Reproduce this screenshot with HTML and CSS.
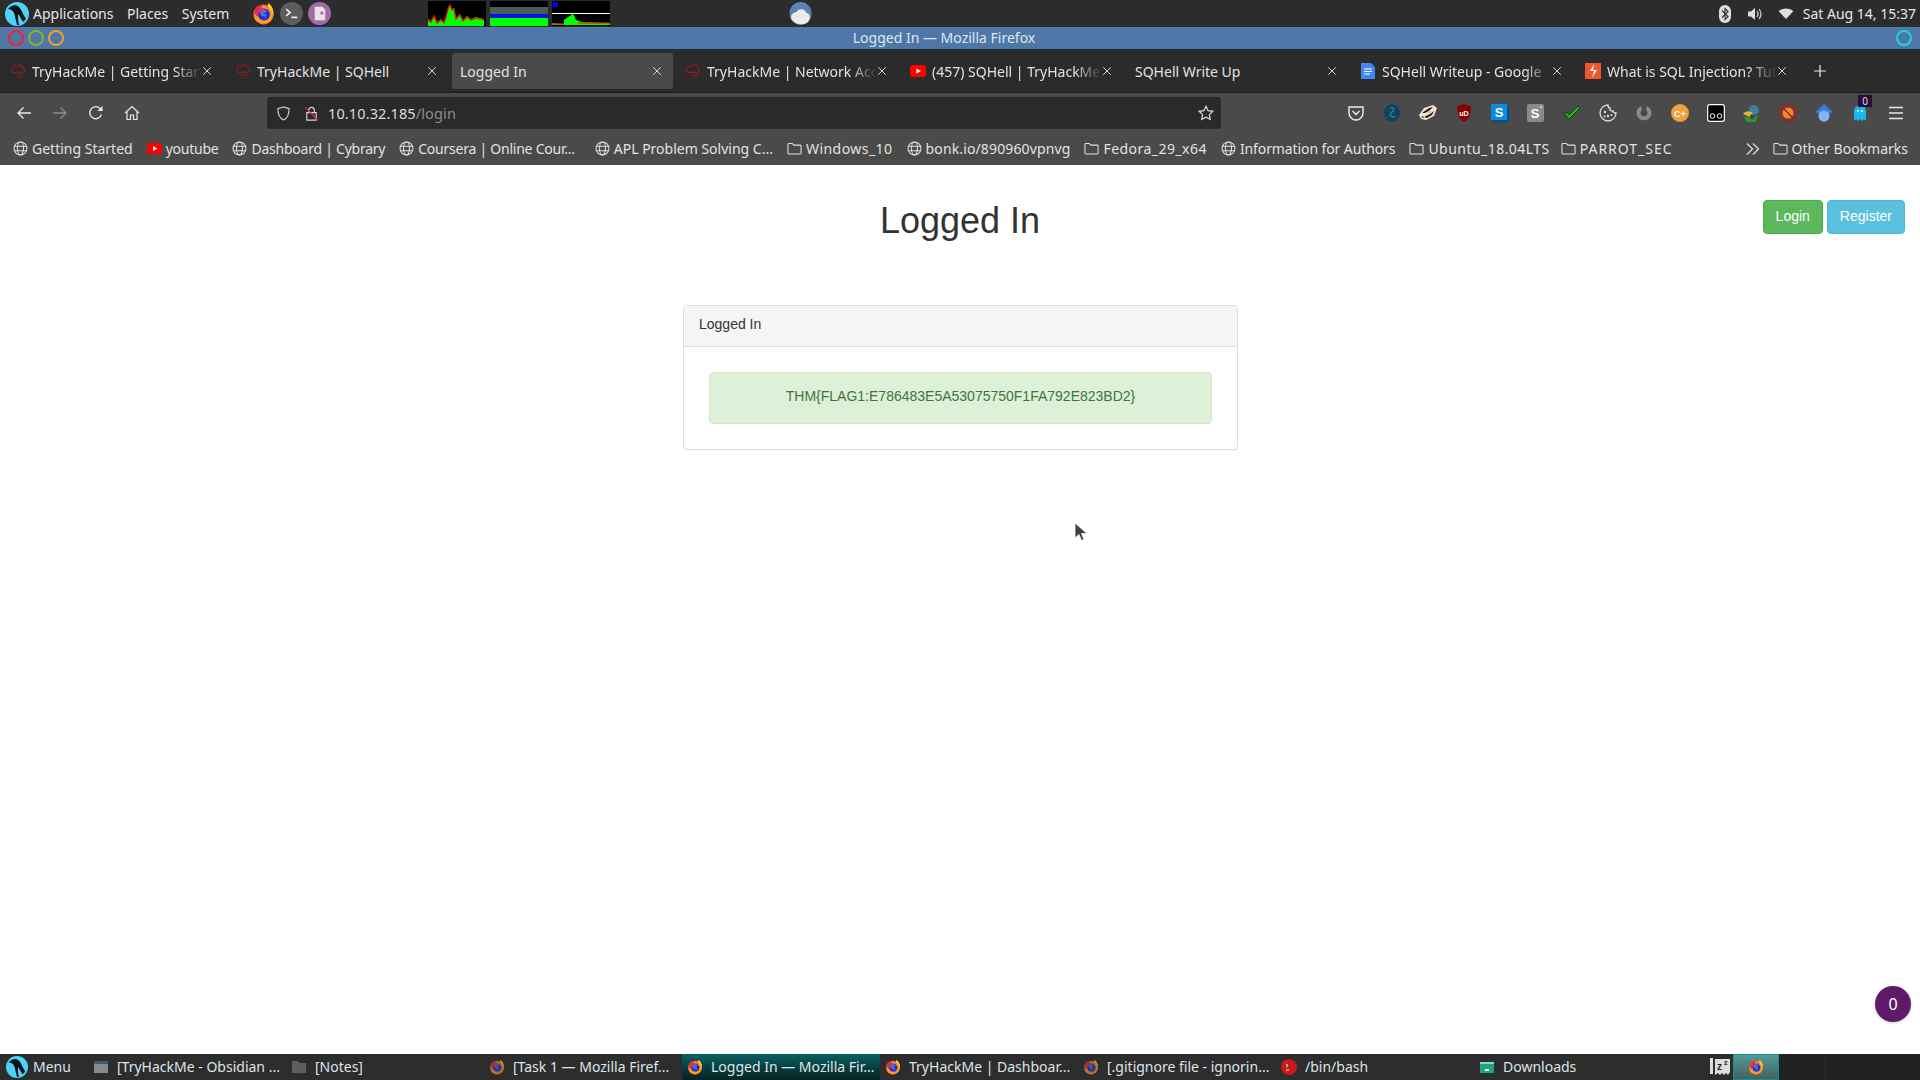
FILE: index.html
```html
<!DOCTYPE html>
<html lang="en">
<head>
<meta charset="utf-8">
<title>Logged In</title>
<link rel="stylesheet" href="styles.css">
</head>
<body>
<svg class="defs" width="0" height="0" aria-hidden="true">
  <defs>
    <symbol id="fx" viewBox="0 0 24 24">
      <circle cx="12" cy="13" r="10.5" fill="#f3702a"/>
      <path d="M4 19C9 24 19 24 22 15c1-4 0-9-4-13 1 3 0 5-1 6-2-3-5-4-7-4 2 2 2 3 2 4-3-1-7 1-9 5 0 3 0 5 1 6z" fill="#ff9d1f"/>
      <path d="M17 1c3 2 6 7 5 12-1-4-3-7-6-8 1-1 1-3 1-4z" fill="#ffd322"/>
      <circle cx="12.5" cy="13" r="6.2" fill="#1a2fd0"/>
      <path d="M8 9c3-2 7-1 8 1-2 1-3 2-6 1l5 2c1 3-2 6-6 5 3 0 5-1 5-3-3 1-6-2-6-6z" fill="#fff" opacity=".3"/>
      <path d="M3 12C2 5 8 2 11 4l-2 2 4 2-3 1c-2 0-4 2-3 5l-2 1z" fill="#e62b4f"/>
    </symbol>
    <symbol id="globe" viewBox="0 0 16 16">
      <g fill="none" stroke="#e2e2e2" stroke-width="1.1">
        <circle cx="8" cy="8" r="6.9"/>
        <ellipse cx="8" cy="8" rx="3.2" ry="6.9"/>
        <path d="M1.5 5.6h13M1.5 10.4h13"/>
      </g>
    </symbol>
    <symbol id="folder" viewBox="0 0 16 16">
      <path d="M1 3.6c0-.6.4-1 1-1h3.6l1.6 1.8H14c.6 0 1 .4 1 1v7.4c0 .6-.4 1-1 1H2c-.6 0-1-.4-1-1z" fill="none" stroke="#e2e2e2" stroke-width="1.1"/>
    </symbol>
    <symbol id="thm" viewBox="0 0 18 18">
      <g fill="none" stroke="#8a1d1d" stroke-width="1.4">
        <path d="M4 10.6C1 10.6.6 7.2 3 6.600c0-3 2.800-4.600 5.200-3.200C9.800 1 13.600 1.800 13.800 5c3-.2 3.600 5.600.2 5.600z"/>
        <path d="M6 13.200h9M9 15.800h5" stroke-width="1"/>
      </g>
    </symbol>
    <symbol id="yt" viewBox="0 0 16 16">
      <rect x="0" y="2" width="16" height="12" rx="3" fill="#f00"/>
      <path d="M6.4 5.4 11 8l-4.6 2.6z" fill="#fff"/>
    </symbol>
    <symbol id="parrot" viewBox="0 0 24 24">
      <circle cx="12" cy="12" r="12" fill="#4fd2f7"/>
      <path d="M3 7c3-4 8-5 11-2 3 3 4 8 7 12-1 1-2 2-3 3-2-3-3-6-5-8 0 3 0 7 1 11h-2c-1-4-2-9-3-12C8 8 5 7 3 7z" fill="#06121c"/>
    </symbol>
    <symbol id="close" viewBox="0 0 12 12">
      <path d="M1.500 1.500l9 9M10.500 1.500l-9 9" stroke="#e6e6e6" stroke-width="1.100" fill="none"/>
    </symbol>
  </defs>
</svg>

<div class="desktop">
  <header class="panel">
    <div class="panel-left">
      <svg class="logo"><use href="#parrot"/></svg>
      <nav class="panel-menu"><span>Applications</span><span>Places</span><span>System</span></nav>
      <div class="launchers">
        <svg class="launch"><use href="#fx"/></svg>
        <svg class="launch" viewBox="0 0 24 24"><circle cx="12" cy="12" r="12" fill="#5c5c5c"/><path d="M6.500 7.500l4 3.500-4 3.500M12 16h6" fill="none" stroke="#eee" stroke-width="1.700"/></svg>
        <svg class="launch" viewBox="0 0 24 24"><circle cx="12" cy="12" r="12" fill="#a36aa6"/><path d="M7 5h8l3 3v11H7z" fill="#e9e3e3"/><path d="M13 10h3v3h-3z" fill="#a36aa6"/></svg>
      </div>
      <div class="monitors">
        <svg class="monitor" viewBox="0 0 58 25" preserveAspectRatio="none"><rect width="58" height="25" fill="#000"/><path d="M0 25V18l3 2 3-6 3 7 4-3 3 3 2-6 2-8 2-4 2 5 2-1 2 10 4-4 3 6 4-4 4 3 5-2 8 2v7z" fill="#0f0"/><path d="M0 19l3 2 3-6 3 7 4-3 3 3 2-6 2-8 2-4 2 5 2-1 2 10 4-4 3 6 4-4 4 3 5-2 8 2" fill="none" stroke="#f00" stroke-width="1.200"/></svg>
        <svg class="monitor" viewBox="0 0 58 25" preserveAspectRatio="none"><rect width="58" height="25" fill="#000"/><rect y="6" width="58" height="9" fill="#4b5c55"/><rect y="13" width="58" height="4" fill="#0018e0"/><rect y="17" width="58" height="8" fill="#0f0"/></svg>
        <svg class="monitor" viewBox="0 0 58 25" preserveAspectRatio="none"><rect width="58" height="25" fill="#000"/><rect x="1" y="1" width="5" height="5" fill="#00f"/><rect y="12" width="58" height="1" fill="#fff"/><path d="M12 23V19l4-3 2-1 2-2 2 1 2 5 6 2 28 1v2H0v-2z" fill="#0f0"/><path d="M0 23h12M26 22h32" stroke="#f00"/></svg>
      </div>
      <svg class="weather" viewBox="0 0 24 24"><ellipse cx="12" cy="12.500" rx="11.500" ry="12" fill="#5a82b4"/><path d="M3 19c-3-5 3-8 5-8 1-4 9-4 10 1 4 0 5 6 2 9-4 4-13 4-17-2z" fill="#ececec"/></svg>
    </div>
    <div class="tray">
      <svg class="tray-bt" viewBox="0 0 12 18"><rect width="12" height="18" rx="6" fill="#ddd"/><path d="M3 5.500l6 6-3 3V3.500l3 3-6 6" fill="none" stroke="#2c2c2c" stroke-width="1.100"/></svg>
      <svg class="tray-vol" viewBox="0 0 16 16"><path d="M1 5.500h3L8 2v12l-4-3.500H1z" fill="#ddd"/><path d="M10 5c1.300 1.800 1.300 4.200 0 6M12 3c2.400 3 2.400 7 0 10" fill="none" stroke="#ddd" stroke-width="1.200"/></svg>
      <svg class="tray-wifi" viewBox="0 0 16 12"><path d="M0 3.500C4-.5 12-.5 16 3.500L8 12z" fill="#ddd"/></svg>
      <span class="clock">Sat Aug 14, 15:37</span>
    </div>
  </header>

  <div class="titlebar">
    <div class="win-btns"><i class="ring ring-red"></i><i class="ring ring-green"></i><i class="ring ring-orange"></i></div>
    <span class="win-title">Logged In — Mozilla Firefox</span>
    <i class="ring ring-cyan"></i>
  </div>

  <div class="tabbar">
    <div class="tab"><svg class="tab-ico"><use href="#thm"/></svg><span class="tab-title fade">TryHackMe | Getting Start</span><svg class="tab-x"><use href="#close"/></svg></div>
    <div class="tab"><svg class="tab-ico"><use href="#thm"/></svg><span class="tab-title">TryHackMe | SQHell</span><svg class="tab-x"><use href="#close"/></svg></div>
    <div class="tab tab-active"><span class="tab-title">Logged In</span><svg class="tab-x"><use href="#close"/></svg></div>
    <div class="tab"><svg class="tab-ico"><use href="#thm"/></svg><span class="tab-title fade">TryHackMe | Network Acc</span><svg class="tab-x"><use href="#close"/></svg></div>
    <div class="tab"><svg class="tab-ico"><use href="#yt"/></svg><span class="tab-title fade">(457) SQHell | TryHackMe</span><svg class="tab-x"><use href="#close"/></svg></div>
    <div class="tab"><span class="tab-title">SQHell Write Up</span><svg class="tab-x"><use href="#close"/></svg></div>
    <div class="tab"><svg class="tab-ico" viewBox="0 0 16 16"><path d="M1 0h10l4 4v12H1z" fill="#4285f4"/><path d="M4 6h8M4 8.500h8M4 11h6" stroke="#fff" stroke-width="1.200"/></svg><span class="tab-title fade">SQHell Writeup - Google</span><svg class="tab-x"><use href="#close"/></svg></div>
    <div class="tab"><svg class="tab-ico" viewBox="0 0 16 16"><rect width="16" height="16" fill="#f0562a"/><path d="M9 1 5 8h4l-2 7 5-8H8z" fill="#fff"/></svg><span class="tab-title fade">What is SQL Injection? Tut</span><svg class="tab-x"><use href="#close"/></svg></div>
    <svg class="tab-plus" viewBox="0 0 12 12"><path d="M6 0v12M0 6h12" stroke="#eee" stroke-width="1.200"/></svg>
  </div>

  <div class="navbar">
    <div class="nav-btns">
      <svg class="nav-ico" viewBox="0 0 16 16"><path d="M15 8H2M7.500 2.500 2 8l5.500 5.500" fill="none" stroke="#e8e8e8" stroke-width="1.300"/></svg>
      <svg class="nav-ico" viewBox="0 0 16 16"><path d="M1 8h13M8.500 2.500 14 8l-5.500 5.500" fill="none" stroke="#8a8a8a" stroke-width="1.300"/></svg>
      <svg class="nav-ico" viewBox="0 0 16 16"><path d="M13.500 9.500A6 6 0 1 1 11.500 3L14 5" fill="none" stroke="#e8e8e8" stroke-width="1.300"/><path d="M14.500 1v5h-5z" fill="#e8e8e8"/></svg>
      <svg class="nav-ico" viewBox="0 0 16 16"><path d="M1 8 8 1.500 15 8M3 7v7.500h3.500V10h3v4.500H13V7" fill="none" stroke="#e8e8e8" stroke-width="1.200"/></svg>
    </div>
    <div class="urlbar">
      <svg class="url-shield" viewBox="0 0 16 16"><path d="M8 1 2 2.800c0 5 1 9.500 6 12.200 5-2.700 6-7.200 6-12.200z" fill="none" stroke="#cfcfcf" stroke-width="1.200"/></svg>
      <svg class="url-lock" viewBox="0 0 16 16"><path d="M5 7V4.500a3 3 0 0 1 6 0V7M3 7h10v8H3z" fill="none" stroke="#d8d8d8" stroke-width="1.200"/><path d="M1.500 1.500 14.500 15" stroke="#e22850" stroke-width="1.400"/></svg>
      <span class="url-text">10.10.32.185<span class="url-dim">/login</span></span>
      <svg class="url-star" viewBox="0 0 16 16"><path d="M8 1.300l2.100 4.400 4.800.6-3.500 3.300.9 4.800L8 12.100l-4.300 2.300.9-4.800L1.100 6.300l4.800-.6z" fill="none" stroke="#dcdcdc" stroke-width="1.200"/></svg>
    </div>
    <div class="ext-row">
      <svg class="ext" viewBox="0 0 18 18"><path d="M2 3h14v6a7 7 0 0 1-14 0z" fill="none" stroke="#eee" stroke-width="1.400"/><path d="M5.500 7 9 10.500 12.500 7" fill="none" stroke="#eee" stroke-width="1.400"/></svg>
      <svg class="ext" viewBox="0 0 18 18"><ellipse cx="9" cy="9" rx="8" ry="9" fill="#12435c"/><path d="M7 4c3-1 5 1 3 3s-4 3-2 5 3 0 4 1" fill="none" stroke="#2c86a8" stroke-width="1.300"/></svg>
      <svg class="ext" viewBox="0 0 18 18"><path d="M0 11 5 4l9-3 4 3-3 8-8 4-5-1z" fill="#efe3d2"/><path d="M3 9l7-5 4-1-3 3-5 3zM5 13l6-3 4-3-2 4-5 3zM2 13l2-1 1 2z" fill="#2a2018"/><path d="M9 8l3-1-2 2z" fill="#c47a3c"/></svg>
      <svg class="ext" viewBox="0 0 18 18"><path d="M9 0 16 2.500c0 7-1 12-7 15.500C3 14.500 2 9.500 2 2.500z" fill="#800"/><text x="9" y="11.500" class="ext-letter" text-anchor="middle">uD</text></svg>
      <svg class="ext" viewBox="0 0 18 18"><path d="M0 0h16v16H0z" fill="#0a8de0"/><path d="M16 2l2 2v14H3l-3-2h16z" fill="#05528a"/><text x="8" y="13" class="ext-s" text-anchor="middle">S</text></svg>
      <svg class="ext" viewBox="0 0 18 18"><rect width="17" height="18" rx="2" fill="#8b8b8b"/><text x="8" y="14" class="ext-s" text-anchor="middle">S</text><circle cx="14" cy="3" r="1" fill="#eee"/></svg>
      <svg class="ext" viewBox="0 0 18 18"><path d="M1 9l5 6L17 4l-2-2-9 9-3-3z" fill="#1db81d" stroke="#0d3a0d" stroke-width="1"/></svg>
      <svg class="ext" viewBox="0 0 18 18"><path d="M9 1a8 8 0 1 0 8 8c-2 0-3-1-3-2-2 0-4-1-3-3-1 0-2-1-2-3z" fill="none" stroke="#ddd" stroke-width="1.300"/><circle cx="6" cy="8" r="1.200" fill="#ddd"/><circle cx="9" cy="12" r="1.200" fill="#ddd"/><circle cx="5.500" cy="12.500" r="1" fill="#ddd"/><circle cx="12.500" cy="11" r="1" fill="#ddd"/></svg>
      <svg class="ext" viewBox="0 0 18 18"><path d="M6 2a7.500 7.500 0 1 0 6 0l-1 4a3.500 3.500 0 1 1-4 0z" fill="#8a8a8a"/></svg>
      <svg class="ext" viewBox="0 0 18 18"><circle cx="9" cy="9" r="9" fill="#f0a03c"/><text x="9" y="13" class="ext-c" text-anchor="middle">C+</text></svg>
      <svg class="ext" viewBox="0 0 18 18"><rect x=".7" y=".7" width="16.600" height="16.600" rx="2" fill="#000" stroke="#fff" stroke-width="1.200"/><circle cx="5.500" cy="12" r="2.300" fill="none" stroke="#fff"/><circle cx="12.500" cy="12" r="2.300" fill="none" stroke="#fff"/></svg>
      <svg class="ext" viewBox="0 0 18 18"><circle cx="11" cy="6" r="5" fill="#3f7ea8"/><path d="M0 10c3-4 7-3 10-1-2 1-3 3-4 4-2-2-4-2-6-3z" fill="#e8b82c"/><path d="M1 13c3-1 6 0 8 3l6-6-2 8H4z" fill="#2a9c2a"/></svg>
      <svg class="ext" viewBox="0 0 18 18"><circle cx="9" cy="9" r="5.500" fill="#e98a2c"/><circle cx="9" cy="9" r="8" fill="none" stroke="#c41212" stroke-width="1.500"/><path d="M3 3l12 12" stroke="#c41212" stroke-width="1.500"/></svg>
      <svg class="ext" viewBox="0 0 18 18"><path d="M9 0 18 8 14 10H4L0 8z" fill="#3b7de0"/><circle cx="9" cy="12" r="5.500" fill="#8ab4f8"/></svg>
      <span class="ext-ghost">
        <svg class="ext" viewBox="0 0 18 18"><path d="M3 17V7a6 6 0 0 1 12 0v10l-2-2-2 2-2-2-2 2-2-2z" fill="#1cb5ec"/><circle cx="7" cy="7" r="1" fill="#fff"/><circle cx="11" cy="7" r="1" fill="#fff"/></svg>
        <span class="ghost-badge">0</span>
      </span>
      <svg class="ext" viewBox="0 0 18 18"><path d="M2 3.500h14M2 9h14M2 14.500h14" stroke="#e8e8e8" stroke-width="1.500"/></svg>
    </div>
  </div>

  <div class="bookmarks">
    <div class="bm"><svg class="bm-ico"><use href="#globe"/></svg>Getting Started</div>
    <div class="bm bm-tight"><svg class="bm-ico"><use href="#yt"/></svg>youtube</div>
    <div class="bm bm-tight"><svg class="bm-ico"><use href="#globe"/></svg>Dashboard | Cybrary</div>
    <div class="bm bm-tight"><svg class="bm-ico"><use href="#globe"/></svg>Coursera | Online Cour...</div>
    <div class="bm bm-shift"><svg class="bm-ico"><use href="#globe"/></svg>APL Problem Solving C...</div>
    <div class="bm bm-wide"><svg class="bm-ico"><use href="#folder"/></svg>Windows_10</div>
    <div class="bm bm-loose"><svg class="bm-ico"><use href="#globe"/></svg>bonk.io/890960vpnvg</div>
    <div class="bm bm-wide"><svg class="bm-ico"><use href="#folder"/></svg>Fedora_29_x64</div>
    <div class="bm bm-snug"><svg class="bm-ico"><use href="#globe"/></svg>Information for Authors</div>
    <div class="bm bm-wide"><svg class="bm-ico"><use href="#folder"/></svg>Ubuntu_18.04LTS</div>
    <div class="bm bm-widest"><svg class="bm-ico"><use href="#folder"/></svg>PARROT_SEC</div>
    <div class="bm-right">
      <svg class="bm-more" viewBox="0 0 14 14"><path d="M1 1.500 6.500 7 1 12.500M7 1.500 12.500 7 7 12.500" fill="none" stroke="#e2e2e2" stroke-width="1.200"/></svg>
      <div class="bm"><svg class="bm-ico"><use href="#folder"/></svg>Other Bookmarks</div>
    </div>
  </div>

  <main class="page">
    <div class="auth-btns">
      <a class="btn btn-login">Login</a>
      <a class="btn btn-register">Register</a>
    </div>
    <h1 class="page-title">Logged In</h1>
    <section class="card">
      <div class="card-head">Logged In</div>
      <div class="card-body">
        <div class="alert">THM{FLAG1:E786483E5A53075750F1FA792E823BD2}</div>
      </div>
    </section>
    <div class="float-badge">0</div>
    <svg class="cursor" viewBox="0 0 14 20"><path d="M1 1v15l4-3.500 2.500 6 2.500-1-2.500-6h5.500z" fill="#404040" stroke="#fff" stroke-width=".8"/></svg>
  </main>

  <footer class="taskbar">
    <div class="menu-btn"><svg class="menu-logo"><use href="#parrot"/></svg>Menu</div>
    <div class="tasks">
      <div class="task"><svg class="task-ico" viewBox="0 0 16 16"><rect x="1" y="2" width="14" height="12" fill="#8a8a8a"/><rect x="1" y="2" width="14" height="3" fill="#3f5a74"/></svg><span class="task-name">[TryHackMe - Obsidian ...</span></div>
      <div class="task"><svg class="task-ico" viewBox="0 0 16 16"><path d="M1 2h6l2 2h6v10H1z" fill="#5e5e5e"/></svg><span class="task-name">[Notes]</span></div>
      <div class="task"><svg class="task-ico task-dim"><use href="#fx"/></svg><span class="task-name">[Task 1 — Mozilla Firef...</span></div>
      <div class="task task-active"><svg class="task-ico"><use href="#fx"/></svg><span class="task-name">Logged In — Mozilla Fir...</span></div>
      <div class="task"><svg class="task-ico"><use href="#fx"/></svg><span class="task-name">TryHackMe | Dashboar...</span></div>
      <div class="task"><svg class="task-ico task-dim"><use href="#fx"/></svg><span class="task-name">[.gitignore file - ignorin...</span></div>
      <div class="task"><svg class="task-ico" viewBox="0 0 16 16"><circle cx="8" cy="8" r="8" fill="#c81c1c"/><path d="M5 5l2 1.500L5 8M5 11h3" fill="none" stroke="#eee"/></svg><span class="task-name">/bin/bash</span></div>
      <div class="task"><svg class="task-ico" viewBox="0 0 16 16"><path d="M1 3h14v11H1z" fill="#1fa584"/><path d="M1 3h14v2H1z" fill="#8fd6c4"/><path d="M6 10h4v2H6z" fill="#e8f5f0"/></svg><span class="task-name">Downloads</span></div>
    </div>
    <div class="tray-end">
      <svg class="sleep" viewBox="0 0 20 18"><path d="M0 0h3v16H0z" fill="#ddd"/><path d="M5 1h15v13l-2 3-2-2-2 2-2-2-2 2-2-2-3 2z" fill="#ddd"/><text x="7" y="12" class="sleep-z">z</text><text x="14" y="7" class="sleep-z2">z</text></svg>
      <div class="ws-active"><svg class="task-ico"><use href="#fx"/></svg></div>
      <div class="ws"></div>
      <div class="ws ws-last"></div>
    </div>
  </footer>
</div>
</body>
</html>
```

FILE: styles.css
```css
* { box-sizing: border-box; }
html, body { margin: 0; height: 100%; overflow: hidden; }
body { font-family: "Noto Sans", sans-serif; font-size: 14px; color: #e4e4e4; }
svg { display: block; flex: none; }
.defs { position: absolute; }
.desktop { width: 1920px; height: 1080px; display: flex; flex-direction: column; }

/* top panel */
.panel { height: 27px; background: #2c2c2c; display: flex; justify-content: space-between; align-items: center; flex: none; }
.panel-left { display: flex; align-items: center; height: 100%; padding-left: 5px; }
.logo { width: 24px; height: 24px; }
.panel-menu { display: flex; gap: 13.5px; margin-left: 4px; color: #e6e6e6; }
.launchers { display: flex; gap: 5px; margin: 0 0 1px 23px; }
.launch { width: 23px; height: 23px; }
.monitors { display: flex; gap: 4px; margin-left: 97px; }
.monitor { width: 58px; height: 25px; }
.weather { width: 23px; height: 24px; margin: 0 0 2px 179px; }
.tray { display: flex; align-items: center; padding-right: 4px; }
.tray-bt { width: 12px; height: 18px; }
.tray-vol { width: 16px; height: 16px; margin-left: 16px; }
.tray-wifi { width: 16px; height: 11px; margin-left: 15px; }
.clock { margin-left: 9px; color: #e6e6e6; }

/* title bar */
.titlebar { height: 22px; flex: none; background: linear-gradient(#4f78aa, #4e76a5); display: flex; align-items: center; justify-content: space-between; padding: 0 8px; }
.win-btns { display: flex; gap: 4px; }
.ring { display: block; width: 16px; height: 16px; border-radius: 50%; border: 2px solid; }
.ring-red { border-color: #f0232f; }
.ring-green { border-color: #8cb31e; }
.ring-orange { border-color: #eaa41f; }
.ring-cyan { border-color: #1cd6d0; }
.win-title { color: #dfe6ef; font-size: 14px; margin: 0 0 2px -72px; }

/* tabs */
.tabbar { height: 44px; flex: none; background: #2b2b2b; border-bottom: 1px solid #1b1b1b; display: flex; align-items: center; gap: 4px; padding: 1px 0 0 2px; color: #e2e2e2; }
.tab { width: 221px; height: 36px; display: flex; align-items: center; gap: 6px; padding: 0 8px; border-radius: 3px; }
.tab-active { background: #4a4a4a; }
.tab-ico { width: 16px; height: 16px; }
.tab-title { flex: 1; min-width: 0; overflow: hidden; white-space: nowrap; }
.fade { margin-right: -6px; -webkit-mask-image: linear-gradient(to right, #000 84%, transparent 100%); mask-image: linear-gradient(to right, #000 84%, transparent 100%); }
.tab-x { width: 10px; height: 10px; margin-right: 3px; }
.tab-plus { width: 12px; height: 12px; margin-left: 12px; }

/* nav */
.navbar { height: 39px; flex: none; background: #4a4a4a; display: flex; align-items: center; padding-top: 1px; }
.nav-btns { display: flex; width: 267px; gap: 20px; padding-left: 16px; }
.nav-ico { width: 16px; height: 16px; }
.urlbar { width: 954px; height: 32px; background: #2a2a2a; border-radius: 3px; display: flex; align-items: center; padding: 0 7px 0 9px; }
.url-shield { width: 15px; height: 15px; }
.url-lock { width: 15px; height: 15px; margin-left: 13px; }
.url-text { flex: 1; margin-left: 9px; color: #dcdcdc; font-size: 14.5px; letter-spacing: .12px; }
.url-dim { color: #8c8c8c; }
.url-star { width: 16px; height: 16px; }
.ext-row { display: flex; align-items: center; gap: 18px; margin-left: 126px; }
.ext { width: 18px; height: 18px; }
.ext-letter { font: bold 7px "Liberation Sans", sans-serif; fill: #fff; }
.ext-s { font: bold 13px "Liberation Sans", sans-serif; fill: #fff; }
.ext-c { font: bold 9px "Liberation Sans", sans-serif; fill: #fff; }
.ext-ghost { position: relative; display: block; }
.ghost-badge { position: absolute; left: 7px; top: -9px; width: 14px; height: 12px; background: #2c0a3c; color: #ddd; font-size: 10px; line-height: 12px; text-align: center; }

/* bookmarks */
.bookmarks { height: 33px; flex: none; background: #4a4a4a; display: flex; align-items: center; gap: 14px; padding: 0 12px 0 13px; color: #e2e2e2; white-space: nowrap; }
.bm { display: flex; align-items: center; gap: 4px; }
.bm-shift { margin-left: 6px; }
.bm-tight { letter-spacing: -.24px; }
.bm-snug { letter-spacing: -.1px; }
.bm-loose { letter-spacing: .13px; }
.bm-wide { letter-spacing: .46px; }
.bm-widest { letter-spacing: 1px; margin-left: -3px; }
.bm-ico { width: 15px; height: 15px; }
.bm-right { margin-left: auto; display: flex; align-items: center; gap: 13px; }
.bm-more { width: 14px; height: 14px; }

/* page */
.page { flex: 1; min-height: 0; background: #fff; position: relative; display: flex; flex-direction: column; align-items: center; font-family: "Liberation Sans", sans-serif; color: #333; }
.auth-btns { position: absolute; top: 35px; right: 15px; display: flex; gap: 4px; }
.btn { height: 34px; padding: 0 12px; border-radius: 4px; color: #fff; line-height: 30px; border: 1px solid; font-size: 14px; }
.btn-login { background: #5cb85c; border-color: #4cae4c; }
.btn-register { background: #5bc0de; border-color: #46b8da; }
.page-title { font-size: 36px; font-weight: 500; line-height: 40px; margin: 36px 0 0; color: #333; }
.card { width: 555px; margin: 64px 0 0 1px; background: #fff; border: 1px solid #ddd; border-radius: 4px; box-shadow: 0 1px 1px rgba(0,0,0,.05); }
.card-head { height: 41px; padding: 8px 15px 12px; background: #f5f5f5; border-bottom: 1px solid #ddd; line-height: 20px; border-radius: 3px 3px 0 0; }
.card-body { padding: 25px; }
.alert { height: 52px; padding: 13px 15px; background: #dff0d8; border: 1px solid #d6e9c6; border-radius: 4px; color: #3c763d; text-align: center; line-height: 20px; }
.float-badge { position: absolute; left: 1875px; top: 821px; width: 36px; height: 36px; border-radius: 50%; background: #5f1a68; color: #fff; font-size: 16px; line-height: 36px; text-align: center; font-family: "Noto Sans", sans-serif; box-shadow: 0 1px 3px rgba(0,0,0,.2); }
.cursor { position: absolute; left: 1074px; top: 357px; width: 14px; height: 20px; }

/* taskbar */
.taskbar { height: 26px; flex: none; background: #2d2d2d; display: flex; align-items: stretch; color: #dfe4ea; }
.menu-btn { width: 88px; display: flex; align-items: center; gap: 4px; padding: 0 0 1px 5px; }
.menu-logo { width: 24px; height: 22px; }
.tasks { display: flex; }
.task { width: 198px; display: flex; align-items: center; gap: 8px; padding: 0 4px 1px 5px; }
.task-name { white-space: nowrap; overflow: hidden; }
.task-ico { width: 16px; height: 16px; }
.task-dim { opacity: .65; }
.task-active { background: linear-gradient(#09615f, #082022); border-radius: 0 0 3px 3px; }
.tray-end { flex: 1; display: flex; align-items: stretch; padding-left: 38px; }
.sleep { width: 20px; height: 18px; align-self: center; }
.sleep-z { font: bold 10px "Liberation Sans", sans-serif; fill: #222; }
.sleep-z2 { font: bold 7px "Liberation Sans", sans-serif; fill: #222; }
.ws-active { width: 46px; margin-left: 3px; background: linear-gradient(#4f9d98, #46605f); border: 1px solid #12908c; display: flex; align-items: center; justify-content: center; }
.ws { width: 47px; background: #222; border-right: 1px solid #2e2e2e; }
.ws-last { flex: 1; border: 0; }
```
